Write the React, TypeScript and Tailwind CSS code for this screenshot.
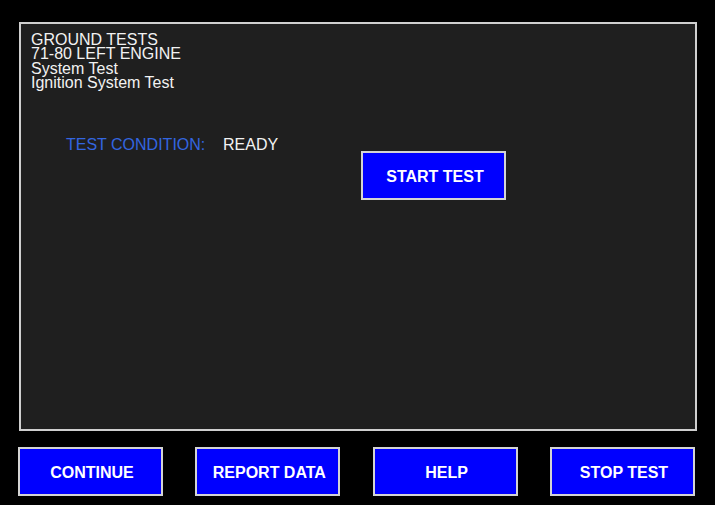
const FONT = "font-['Liberation_Sans',Arial,sans-serif]";

function PanelButton({ label }: { label: string }) {
  return (
    <button
      className={`w-[145px] h-[49px] bg-[#0000ff] border-2 border-[#d4d4d4] pl-[3px] pt-[2px] text-white font-bold text-[16px] leading-none ${FONT}`}
    >
      {label}
    </button>
  );
}

export default function App() {
  return (
    <div className={`w-[715px] h-[505px] bg-black px-[18px] pt-[22px] ${FONT}`}>
      {/* Main test panel */}
      <div className="ml-[1px] w-[678px] h-[409px] border-2 border-[#cfcfcf] bg-[#1f1f1f] pt-[9px] pl-[10px]">
        <div className="text-[16px] leading-[14.3px] text-[#f2f2f2]">
          <div>GROUND TESTS</div>
          <div>71-80 LEFT ENGINE</div>
          <div>System Test</div>
          <div>Ignition System Test</div>
        </div>

        <div className="mt-[47px] pl-[35px] flex text-[16px] leading-[16px]">
          <span className="w-[157px] text-[#3366e0]">TEST CONDITION:</span>
          <span className="text-[#f2f2f2]">READY</span>
        </div>

        <div className="ml-[330px] -mt-[2px]">
          <PanelButton label="START TEST" />
        </div>
      </div>

      {/* Bottom button row */}
      <div className="mt-[16px] w-[677px] flex justify-between">
        <PanelButton label="CONTINUE" />
        <PanelButton label="REPORT DATA" />
        <PanelButton label="HELP" />
        <PanelButton label="STOP TEST" />
      </div>
    </div>
  );
}
